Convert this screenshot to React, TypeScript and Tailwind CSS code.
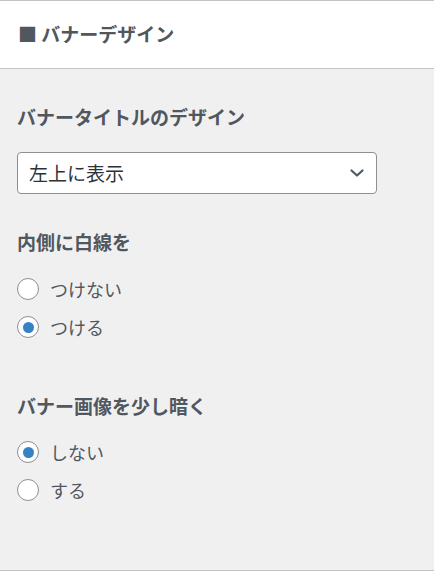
import { useState } from "react";

const font = {
  fontFamily: '"Noto Sans CJK JP", "Noto Sans", sans-serif',
};

interface RadioGroupProps {
  options: string[];
  value: string;
  onChange: (v: string) => void;
}

function RadioGroup({ options, value, onChange }: RadioGroupProps) {
  return (
    <div className="flex flex-col gap-[8px]">
      {options.map((opt) => (
        <label
          key={opt}
          className="flex h-[30px] cursor-pointer items-center gap-[11px]"
          onClick={() => onChange(opt)}
        >
          <span className="flex h-[22px] w-[22px] items-center justify-center rounded-full border border-[#8c8f94] bg-white">
            {value === opt && (
              <span className="h-[11px] w-[11px] rounded-full bg-[#3582c4]" />
            )}
          </span>
          <span className="text-[18px] leading-[30px] text-[#50575e]">{opt}</span>
        </label>
      ))}
    </div>
  );
}

export default function App() {
  const [border, setBorder] = useState("つける");
  const [dark, setDark] = useState("しない");

  return (
    <div className="h-[571px] w-[434px] bg-[#f0f0f1]" style={font}>
      {/* Section header */}
      <div className="flex h-[69px] items-center border-y border-[#c3c4c7] bg-white px-[18px]">
        <h2 className="text-[19px] font-bold text-[#50575e]">■ バナーデザイン</h2>
      </div>

      <div className="px-[17px] pt-[35px]">
        <h3 className="text-[19px] leading-[26px] font-bold text-[#50575e]">
          バナータイトルのデザイン
        </h3>
        <div className="mt-[22px] flex h-[42px] w-[360px] items-center justify-between rounded-[4px] border border-[#8c8f94] bg-white pr-[11px] pl-[11px]">
          <span className="text-[19px] text-[#2c3338]">左上に表示</span>
          <svg width="16" height="16" viewBox="0 0 16 16" fill="none">
            <path
              d="M2.5 5.5 8 10.5l5.5-5"
              stroke="#50575e"
              strokeWidth="2.2"
              strokeLinecap="round"
              strokeLinejoin="round"
            />
          </svg>
        </div>

        <h3 className="mt-[35px] text-[19px] leading-[26px] font-bold text-[#50575e]">
          内側に白線を
        </h3>
        <div className="mt-[19px]">
          <RadioGroup
            options={["つけない", "つける"]}
            value={border}
            onChange={setBorder}
          />
        </div>

        <h3 className="mt-[51px] text-[19px] leading-[26px] font-bold text-[#50575e]">
          バナー画像を少し暗く
        </h3>
        <div className="mt-[18px]">
          <RadioGroup
            options={["しない", "する"]}
            value={dark}
            onChange={setDark}
          />
        </div>
      </div>
      <div className="mt-[65px] border-b border-[#c3c4c7]" />
    </div>
  );
}
